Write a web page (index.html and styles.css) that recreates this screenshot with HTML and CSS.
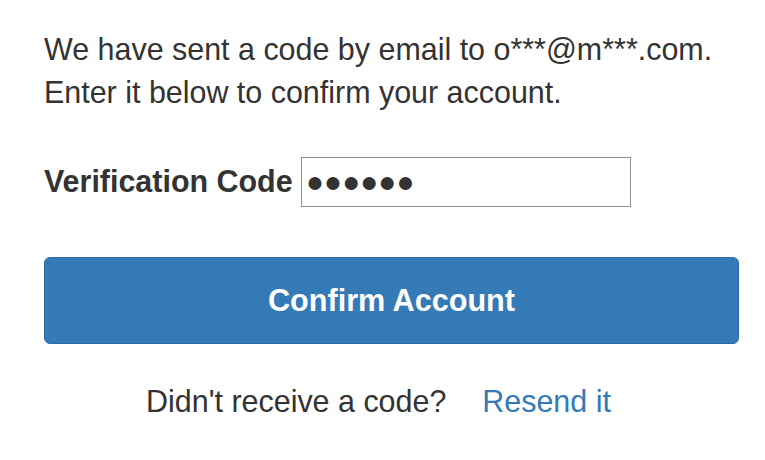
FILE: index.html
```html
<!DOCTYPE html>
<html>
<head>
<meta charset="utf-8">
<link rel="stylesheet" href="styles.css">
</head>
<body>
<div class="panel">
  <p class="intro">We have sent a code by email to o***@m***.com.<br>Enter it below to confirm your account.</p>
  <form class="form">
    <div class="field">
      <label class="label" for="code">Verification Code</label>
      <input class="input" id="code" type="text" value="●●●●●●" readonly>
    </div>
    <button class="btn" type="button">Confirm Account</button>
    <div class="resend">
      <span class="resend-text">Didn't receive a code?</span>
      <a class="resend-link" href="#">Resend it</a>
    </div>
  </form>
</div>
</body>
</html>
```
FILE: styles.css
```css
html, body {
  margin: 0;
  padding: 0;
  background: #fff;
}
body {
  font-family: "Liberation Sans", Arial, sans-serif;
  color: #333;
}
.panel {
  width: 695px;
  padding: 28px 0 0 44px;
}
.intro {
  margin: 0;
  font-size: 30.45px;
  line-height: 42.86px;
}
.form {
  margin: 0;
}
.field {
  display: flex;
  align-items: center;
  gap: 8px;
  margin-top: 43px;
}
.label {
  font-weight: bold;
  font-size: 30.45px;
}
.input {
  box-sizing: border-box;
  width: 330px;
  height: 50px;
  border: 1px solid #8f8f8f;
  padding: 0 4px;
  font-family: "Liberation Sans", Arial, sans-serif;
  font-size: 30px;
  color: #333;
  outline: none;
}
.btn {
  display: block;
  box-sizing: border-box;
  width: 695px;
  height: 87px;
  margin-top: 50px;
  border: 1px solid #2e6da4;
  border-radius: 6px;
  background: #337ab7;
  color: #fff;
  font-family: "Liberation Sans", Arial, sans-serif;
  font-weight: bold;
  font-size: 30.6px;
}
.resend {
  display: flex;
  justify-content: center;
  align-items: baseline;
  gap: 36px;
  margin-top: 36px;
  padding-right: 26px;
  font-size: 30.45px;
  line-height: 42.86px;
}
.resend-link {
  color: #337ab7;
  text-decoration: none;
}
```
